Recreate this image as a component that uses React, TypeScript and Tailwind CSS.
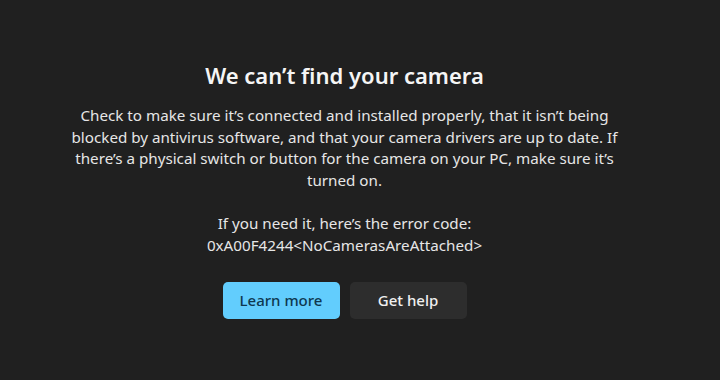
export default function App() {
  return (
    <div
      className="h-[380px] w-full bg-[#202020] text-white flex flex-col items-center pr-[31px]"
      style={{ fontFamily: '"Noto Sans", "Open Sans", sans-serif' }}
    >
      <h1 className="mt-[60px] text-[22px] leading-[30px] font-semibold text-[#f5f5f5]">
        We can’t find your camera
      </h1>
      <p className="mt-[15px] text-[15.2px] leading-[21.7px] text-center text-[#e6e6e6] whitespace-nowrap">
        Check to make sure it’s connected and installed properly, that it isn’t being
        <br />
        blocked by antivirus software, and that your camera drivers are up to date. If
        <br />
        there’s a physical switch or button for the camera on your PC, make sure it’s
        <br />
        turned on.
      </p>
      <p className="mt-[21px] text-[15.2px] leading-[21.7px] text-center text-[#e6e6e6] whitespace-nowrap">
        If you need it, here’s the error code:
        <br />
        0xA00F4244&lt;NoCamerasAreAttached&gt;
      </p>
      <div className="mt-[26px] flex gap-[10px]">
        <button className="w-[117px] h-[37px] rounded-[5px] bg-[#62cdfd] text-[#0e3850] text-[15px] font-medium">
          Learn more
        </button>
        <button className="w-[117px] h-[37px] rounded-[5px] bg-[#2d2d2d] text-[#f0f0f0] text-[15px] font-medium">
          Get help
        </button>
      </div>
    </div>
  )
}
